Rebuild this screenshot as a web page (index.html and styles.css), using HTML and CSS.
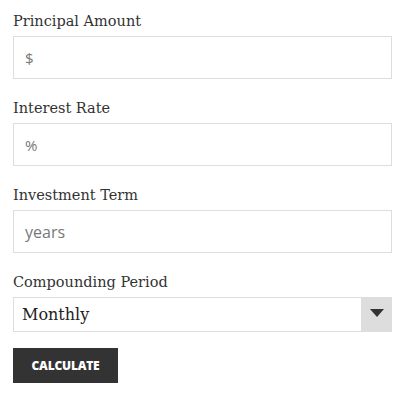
FILE: index.html
```html
<!DOCTYPE html>
<html>
<head>
<meta charset="utf-8">
<link rel="stylesheet" href="styles.css">
</head>
<body>
<form class="calc">
  <div class="field">
    <label class="label">Principal Amount</label>
    <input class="input" type="text" placeholder="$">
  </div>
  <div class="field">
    <label class="label">Interest Rate</label>
    <input class="input" type="text" placeholder="%">
  </div>
  <div class="field">
    <label class="label">Investment Term</label>
    <input class="input input-lg" type="text" placeholder="years">
  </div>
  <div class="field">
    <label class="label">Compounding Period</label>
    <div class="select">
      <span class="select-value">Monthly</span>
      <span class="select-arrow"><svg width="14" height="8" viewBox="0 0 14 8"><path d="M0 0H14L7 8Z" fill="#333"/></svg></span>
    </div>
  </div>
  <button class="btn" type="button">Calculate</button>
</form>
</body>
</html>
```
FILE: styles.css
```css
html, body { margin: 0; padding: 0; background: #fff; }
body { padding: 8px 13px 0 13px; }
.calc { width: 379px; display: flex; flex-direction: column; }
.field { display: flex; flex-direction: column; margin-bottom: 16px; }
.label {
  font-family: "DejaVu Serif", "Liberation Serif", serif;
  font-size: 14.5px; line-height: 22px; color: #333; margin-bottom: 4px; padding-top: 2px;
}
.input {
  box-sizing: border-box; height: 43px; width: 100%;
  border: 1px solid #ddd; margin: 0; padding: 0 11px;
  font-family: "Open Sans", sans-serif; font-size: 15px; color: #333;
  outline: none; background: #fff;
}
.input::placeholder { color: #777; }
.input-lg { font-size: 16px; }
.select {
  box-sizing: border-box; height: 35px; border: 1px solid #ddd;
  display: flex; align-items: stretch; margin-top: 0;
}
.select-value {
  flex: 1; display: flex; align-items: center; padding-left: 8px;
  font-family: "DejaVu Serif", "Liberation Serif", serif; font-size: 16px; color: #222;
}
.select-arrow {
  width: 31px; background: #ddd; display: flex; align-items: center; justify-content: center;
  margin: -1px -1px -1px 0; padding-bottom: 4px; box-sizing: border-box;
}
.btn {
  align-self: flex-start; margin-top: 0; width: 105px; height: 35px;
  background: #333; color: #fff; border: 0;
  font-family: "Open Sans", sans-serif; font-weight: 800; font-size: 12px;
  text-transform: uppercase; letter-spacing: -0.2px; padding: 0;
}
```
